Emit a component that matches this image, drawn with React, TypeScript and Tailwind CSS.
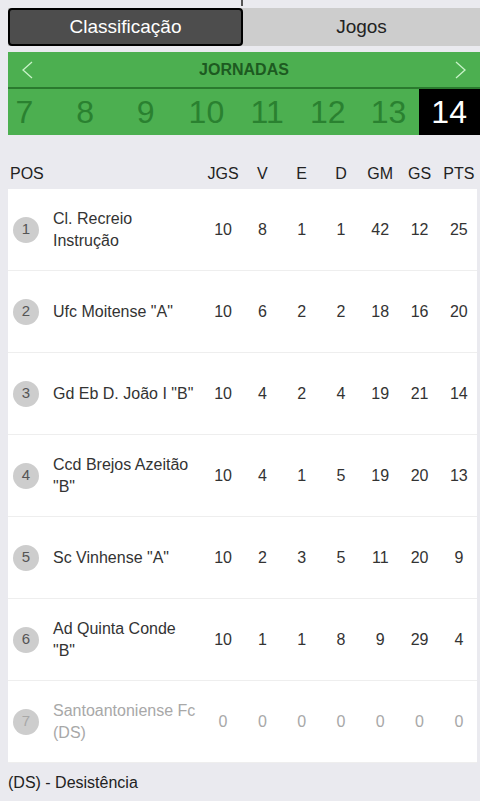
import React from "react";

const rows = [
  { pos: 1, name: "Cl. Recreio Instrução", v: [10, 8, 1, 1, 42, 12, 25] },
  { pos: 2, name: 'Ufc Moitense "A"', v: [10, 6, 2, 2, 18, 16, 20] },
  { pos: 3, name: 'Gd Eb D. João I "B"', v: [10, 4, 2, 4, 19, 21, 14] },
  { pos: 4, name: 'Ccd Brejos Azeitão "B"', v: [10, 4, 1, 5, 19, 20, 13] },
  { pos: 5, name: 'Sc Vinhense "A"', v: [10, 2, 3, 5, 11, 20, 9] },
  { pos: 6, name: 'Ad Quinta Conde "B"', v: [10, 1, 1, 8, 9, 29, 4] },
  { pos: 7, name: "Santoantoniense Fc (DS)", v: [0, 0, 0, 0, 0, 0, 0], ds: true },
];

const heads = ["JGS", "V", "E", "D", "GM", "GS", "PTS"];
const rounds = [7, 8, 9, 10, 11, 12, 13, 14];

export default function App() {
  return (
    <div
      className="w-[480px] h-[801px] overflow-hidden bg-[#eaeaef] text-[#222]"
      style={{ fontFamily: '"Liberation Sans", Arial, sans-serif' }}
    >
      <div className="h-[8px] pl-[241px]">
        <div className="w-[2px] h-[6px] bg-[#555]" />
      </div>
      <div className="pl-2">
        <div className="flex h-[38px] bg-[#cdcdcd]">
          <div className="w-[235px] flex items-center justify-center bg-[#4d4d4d] border-2 border-black rounded-[4px] text-white text-[19px]">
            Classificação
          </div>
          <div className="flex-1 flex items-center justify-center text-[19px] text-[#222]">
            Jogos
          </div>
        </div>

        <div className="mt-[6px] bg-[#4caf50]">
          <div className="h-[37px] flex items-center justify-between px-[13px] border-b-2 border-[#2a7a2e]">
            <svg width="12" height="18" viewBox="0 0 12 18" fill="none">
              <path d="M11 1 L2 9 L11 17" stroke="#c9f3c9" strokeWidth="1.3" />
            </svg>
            <span className="text-[16px] font-bold text-[#1d5a21]">JORNADAS</span>
            <svg width="12" height="18" viewBox="0 0 12 18" fill="none">
              <path d="M1 1 L10 9 L1 17" stroke="#c9f3c9" strokeWidth="1.3" />
            </svg>
          </div>
          <div className="h-[46px] overflow-hidden">
            <div className="flex h-full -ml-[14px]">
              {rounds.map((r) => (
                <div
                  key={r}
                  className={
                    r === 14
                      ? "w-[60.7px] shrink-0 flex items-center justify-center bg-black text-white text-[32px]"
                      : "w-[60.7px] shrink-0 flex items-center justify-center text-[#2a8130] text-[32px]"
                  }
                >
                  {r}
                </div>
              ))}
            </div>
          </div>
        </div>

        <div className="mr-[3px]">
          <div className="grid grid-cols-[45px_1fr_repeat(7,39.3px)] items-center h-[54px] pt-[24px] text-[16px] text-[#222]">
            <div className="pl-[2px]">POS</div>
            <div />
            {heads.map((h) => (
              <div key={h} className="text-center pl-[3px]">
                {h}
              </div>
            ))}
          </div>
          <div className="bg-white">
            {rows.map((r) => (
              <div
                key={r.pos}
                className={
                  "grid grid-cols-[45px_1fr_repeat(7,39.3px)] items-center h-[82px] border-b border-[#eeeeee] text-[16px] " +
                  (r.ds ? "text-[#a8a8a8]" : "text-[#333]")
                }
              >
                <div className="pl-[5px]">
                  <div
                    className={
                      "w-[26px] h-[26px] rounded-full bg-[#cdcdcd] flex items-center justify-center text-[15px] " +
                      (r.ds ? "text-[#a8a8a8]" : "text-[#555]")
                    }
                  >
                    {r.pos}
                  </div>
                </div>
                <div className="leading-[22px] pr-[1px]">{r.name}</div>
                {r.v.map((n, i) => (
                  <div key={i} className="text-center pl-[3px]">
                    {n}
                  </div>
                ))}
              </div>
            ))}
          </div>
        </div>
        <div className="pt-[9px] leading-[22px] text-[16px] text-[#222]">(DS) - Desistência</div>
      </div>
    </div>
  );
}
